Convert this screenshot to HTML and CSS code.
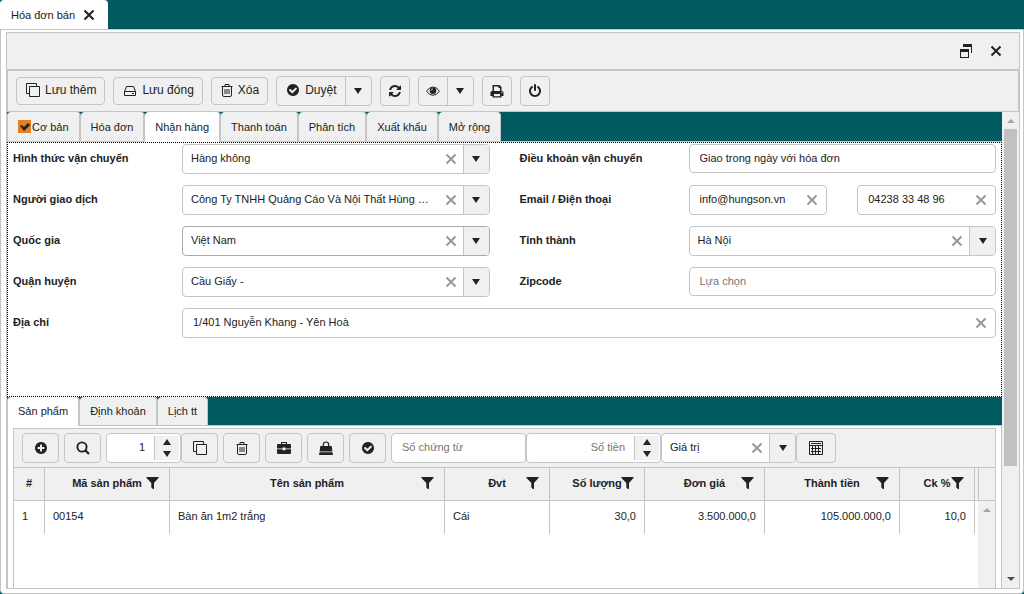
FILE: index.html
```html
<!DOCTYPE html>
<html lang="vi">
<head>
<meta charset="utf-8">
<title>Hóa đơn bán</title>
<link rel="stylesheet" href="styles.css">
</head>
<body>
<svg class="defs" aria-hidden="true">
  <symbol id="x" viewBox="0 0 14 14"><path d="M2.500 2.500l9 9M11.500 2.500l-9 9" fill="none" stroke="currentColor" stroke-width="2"/></symbol>
  <symbol id="down" viewBox="0 0 8 6" preserveAspectRatio="none"><path d="M0 0h8L4 6z"/></symbol>
  <symbol id="copy" viewBox="0 0 14 14"><path d="M3.500 3.500h10v10h-10zM3.500 10.500h-3v-10h10v3" fill="none" stroke="currentColor"/></symbol>
  <symbol id="drive" viewBox="0 0 14 14"><path d="M1.500 8.500L3.500 3.500h7l2 5v4h-11zM1.500 8.500h11M9 10.500h2" fill="none" stroke="currentColor"/></symbol>
  <symbol id="trash" viewBox="0 0 12 14"><path d="M.5 3.500h11M4 3V1.500h4V3M1.500 3.500v8.500q0 1.500 1.500 1.500h6q1.500 0 1.500-1.500V3.500M4 6v5M6 6v5M8 6v5" fill="none" stroke="currentColor"/></symbol>
  <symbol id="check" viewBox="0 0 1792 1792"><path d="M1412 734q0-28-18-46l-91-90q-19-19-45-19t-45 19l-408 407-226-226q-19-19-45-19t-45 19l-91 90q-18 18-18 46 0 27 18 45l362 362q19 19 45 19 27 0 46-19l543-543q18-18 18-45zm252 162q0 209-103 385.500t-279.500 279.500-385.500 103-385.500-103-279.500-279.500-103-385.500 103-385.500 279.500-279.500 385.500-103 385.500 103 279.500 279.500 103 385.500z"/></symbol>
  <symbol id="plus" viewBox="0 0 1792 1792"><path d="M1344 960v-128q0-26-19-45t-45-19h-256v-256q0-26-19-45t-45-19h-128q-26 0-45 19t-19 45v256h-256q-26 0-45 19t-19 45v128q0 26 19 45t45 19h256v256q0 26 19 45t45 19h128q26 0 45-19t19-45v-256h256q26 0 45-19t19-45zm320-64q0 209-103 385.500t-279.500 279.500-385.500 103-385.500-103-279.500-279.500-103-385.500 103-385.500 279.500-279.500 385.500-103 385.500 103 279.500 279.500 103 385.500z"/></symbol>
  <symbol id="refresh" viewBox="0 0 1792 1792"><path d="M1639 1056q0 5-1 7-64 268-268 434.500t-478 166.500q-146 0-282.500-55t-243.500-157l-129 129q-19 19-45 19t-45-19-19-45v-448q0-26 19-45t45-19h448q26 0 45 19t19 45-19 45l-137 137q71 66 161 102t187 36q134 0 250-65t186-179q11-17 53-117 8-23 30-23h192q13 0 22.500 9.500t9.500 22.500zm25-800v448q0 26-19 45t-45 19h-448q-26 0-45-19t-19-45 19-45l138-138q-148-137-349-137-134 0-250 65t-186 179q-11 17-53 117-8 23-30 23h-199q-13 0-22.500-9.500t-9.500-22.500v-7q65-268 270-434.500t480-166.500q146 0 284 55.500t245 156.500l130-129q19-19 45-19t45 19 19 45z"/></symbol>
  <symbol id="power" viewBox="0 0 1792 1792"><path d="M1664 896q0 156-61 298t-164 245-245 164-298 61-298-61-245-164-164-245-61-298q0-182 80.500-343t226.500-270q43-32 95.500-25t83.500 50q32 42 24.500 94.500t-49.500 84.500q-98 74-151.500 181t-53.500 228q0 104 40.500 198.500t109.500 163.500 163.500 109.500 198.500 40.500 198.500-40.500 163.500-109.500 109.500-163.500 40.500-198.500q0-121-53.500-228t-151.500-181q-42-32-49.500-84.500t24.500-94.500q31-43 84-50t95 25q146 109 226.500 270t80.500 343zm-640-768v640q0 52-38 90t-90 38-90-38-38-90v-640q0-52 38-90t90-38 90 38 38 90z"/></symbol>
  <symbol id="eye" viewBox="0 0 14 14"><path d="M.6 7.200Q3.200 3 7 3t6.400 4.200Q10.800 11.300 7 11.300T.6 7.200z" fill="none" stroke="currentColor"/><circle cx="7" cy="6.700" r="3.300"/><path d="M5.200 6.600Q5.300 5 7 4.900" fill="none" stroke="#f0f0f0" stroke-width=".8"/></symbol>
  <symbol id="print" viewBox="0 0 14 14"><path d="M2.500 1h7l2 2v4h.5q1.500 0 1.500 1.500V12h-2v1.500h-9V12h-2V8.500Q.5 7 2 7h.5zM4 2.500V7h6V4H8.500V2.500zM4 10v2.300h6V10zM11.300 8v1h1V8z" fill-rule="evenodd"/></symbol>
  <symbol id="search" viewBox="0 0 14 14"><circle cx="6" cy="6" r="4.600" fill="none" stroke="currentColor" stroke-width="1.900"/><path d="M9.300 9.300L13 13" stroke="currentColor" stroke-width="2.300"/></symbol>
  <symbol id="case" viewBox="0 0 14 14"><path d="M4 3V1h6v2h3q1 0 1 1v3.500H8.500v-1h-3v1H0V4q0-1 1-1zM5.200 3h3.600v-.9H5.200zM0 8.300h5.500v1h3v-1H14V12q0 1-1 1H1q-1 0-1-1z" fill-rule="evenodd"/></symbol>
  <symbol id="bag" viewBox="0 0 14 14"><path d="M1.300 5h11.400l.7 5.500H.6zM.5 11.200h13L14 14H0z"/><path d="M4.300 7V3.700Q4.300 1 7 1t2.700 2.700V7" fill="none" stroke="currentColor" stroke-width="1.200"/></symbol>
  <symbol id="calc" viewBox="0 0 14 14"><path d="M.5.500h13v13H.5zM.5 4.500h13M3.500 5v8M6.500 5v8M9.500 5v8M2 7.500h10M2 10.500h10M2 2.500h10" fill="none" stroke="currentColor"/></symbol>
  <symbol id="funnel" viewBox="0 0 12 12"><path d="M0 0h12v1L7.500 6v6h-1L4.800 10.500V6L0 1z"/></symbol>
  <symbol id="restore" viewBox="0 0 12 14"><path d="M3 0h9v9h-1V3H3zM0 5h9v9H0zM1 8v5h7V8z" fill-rule="evenodd"/></symbol>
</svg>
<div class="app">
  <header class="doc-tabs">
    <div class="doc-tab">Hóa đơn bán <button class="plain" aria-label="Đóng thẻ"><svg class="ic14"><use href="#x"/></svg></button></div>
  </header>
  <div class="doc">
    <main class="window">
      <div class="titlebar">
        <button class="plain" aria-label="Khôi phục"><svg class="restore"><use href="#restore"/></svg></button>
        <button class="plain" aria-label="Đóng"><svg class="ic14"><use href="#x"/></svg></button>
      </div>
      <div class="toolbar">
        <button class="btn text"><svg class="ic14"><use href="#copy"/></svg>Lưu thêm</button>
        <button class="btn text"><svg class="ic14"><use href="#drive"/></svg>Lưu đóng</button>
        <button class="btn text"><svg class="bin"><use href="#trash"/></svg>Xóa</button>
        <div class="split"><button class="main"><svg class="ic14"><use href="#check"/></svg>Duyệt</button><button class="arrow" aria-label="Mở danh sách duyệt"><svg class="tri"><use href="#down"/></svg></button></div>
        <button class="btn icon" aria-label="Làm mới"><svg class="ic14"><use href="#refresh"/></svg></button>
        <div class="split"><button class="eye" aria-label="Xem"><svg class="ic14"><use href="#eye"/></svg></button><button class="arrow" aria-label="Tùy chọn xem"><svg class="tri"><use href="#down"/></svg></button></div>
        <button class="btn icon" aria-label="In"><svg class="ic14"><use href="#print"/></svg></button>
        <button class="btn icon" aria-label="Thoát"><svg class="ic14"><use href="#power"/></svg></button>
      </div>
      <div class="body">
        <div class="content">
          <nav class="tabs top">
            <label class="tab checked"><input type="checkbox" checked>Cơ bản</label>
            <button class="tab">Hóa đơn</button>
            <button class="tab active">Nhận hàng</button>
            <button class="tab">Thanh toán</button>
            <button class="tab">Phân tích</button>
            <button class="tab">Xuất khẩu</button>
            <button class="tab">Mở rộng</button>
          </nav>
          <form class="form">
            <label for="ship">Hình thức vận chuyển</label>
            <div class="field"><select id="ship"><option>Hàng không</option></select><button type="button" class="clear" aria-label="Xóa"><svg><use href="#x"/></svg></button><span class="drop"><svg class="tri"><use href="#down"/></svg></span></div>
            <label class="second" for="terms">Điều khoản vận chuyển</label>
            <div class="field short"><input id="terms" value="Giao trong ngày với hóa đơn"></div>

            <label for="person">Người giao dịch</label>
            <div class="field"><select id="person"><option>Công Ty TNHH Quảng Cáo Và Nội Thất Hùng …</option></select><button type="button" class="clear" aria-label="Xóa"><svg><use href="#x"/></svg></button><span class="drop"><svg class="tri"><use href="#down"/></svg></span></div>
            <label class="second" for="email">Email / Điện thoại</label>
            <div class="pair">
              <div class="field"><input id="email" value="info@hungson.vn"><button type="button" class="clear" aria-label="Xóa"><svg><use href="#x"/></svg></button></div>
              <div class="field"><input aria-label="Điện thoại" value="04238 33 48 96"><button type="button" class="clear" aria-label="Xóa"><svg><use href="#x"/></svg></button></div>
            </div>

            <label for="country">Quốc gia</label>
            <div class="field hover"><select id="country"><option>Việt Nam</option></select><button type="button" class="clear" aria-label="Xóa"><svg><use href="#x"/></svg></button><span class="drop"><svg class="tri"><use href="#down"/></svg></span></div>
            <label class="second" for="city">Tỉnh thành</label>
            <div class="field"><select id="city"><option>Hà Nội</option></select><button type="button" class="clear" aria-label="Xóa"><svg><use href="#x"/></svg></button><span class="drop"><svg class="tri"><use href="#down"/></svg></span></div>

            <label for="district">Quận huyện</label>
            <div class="field"><select id="district"><option>Cầu Giấy -</option></select><button type="button" class="clear" aria-label="Xóa"><svg><use href="#x"/></svg></button><span class="drop"><svg class="tri"><use href="#down"/></svg></span></div>
            <label class="second" for="zip">Zipcode</label>
            <div class="field short"><input id="zip" placeholder="Lựa chọn"></div>

            <label for="address">Địa chỉ</label>
            <div class="field wide"><input id="address" value="1/401 Nguyễn Khang - Yên Hoà"><button type="button" class="clear" aria-label="Xóa"><svg><use href="#x"/></svg></button></div>
          </form>
          <nav class="tabs">
            <button class="tab active">Sản phẩm</button>
            <button class="tab">Định khoản</button>
            <button class="tab">Lịch tt</button>
          </nav>
          <section class="panel">
            <div class="grid">
              <div class="gridbar">
                <button class="btn tool" aria-label="Thêm"><svg class="ic14"><use href="#plus"/></svg></button>
                <button class="btn tool" aria-label="Tìm"><svg class="ic14"><use href="#search"/></svg></button>
                <div class="joined">
                  <div class="field qty"><input aria-label="Số dòng" value="1"><span class="spin"><button aria-label="Tăng"><svg class="tri up"><use href="#down"/></svg></button><button aria-label="Giảm"><svg class="tri"><use href="#down"/></svg></button></span></div>
                  <button class="btn tool" aria-label="Sao chép"><svg class="ic14"><use href="#copy"/></svg></button>
                </div>
                <button class="btn tool" aria-label="Xóa dòng"><svg class="bin"><use href="#trash"/></svg></button>
                <button class="btn tool" aria-label="Công việc"><svg class="ic14"><use href="#case"/></svg></button>
                <button class="btn tool" aria-label="Giỏ hàng"><svg class="ic14"><use href="#bag"/></svg></button>
                <button class="btn tool" aria-label="Duyệt"><svg class="ic14"><use href="#check"/></svg></button>
                <div class="joined">
                  <div class="field filter"><input aria-label="Số chứng từ" placeholder="Số chứng từ"></div>
                  <div class="field filter amount"><input aria-label="Số tiền" placeholder="Số tiền"><span class="spin"><button aria-label="Tăng"><svg class="tri up"><use href="#down"/></svg></button><button aria-label="Giảm"><svg class="tri"><use href="#down"/></svg></button></span></div>
                  <div class="field filter"><select aria-label="Loại"><option>Giá trị</option></select><button class="clear" aria-label="Xóa"><svg><use href="#x"/></svg></button><span class="drop"><svg class="tri"><use href="#down"/></svg></span></div>
                  <button class="btn calc" aria-label="Tính"><svg class="ic14"><use href="#calc"/></svg></button>
                </div>
              </div>
              <div class="gridbody">
                <table>
                  <colgroup><col class="c-no"><col class="c-code"><col class="c-name"><col class="c-unit"><col class="c-qty"><col class="c-price"><col class="c-total"><col class="c-ck"><col></colgroup>
                  <thead><tr>
                    <th>#</th>
                    <th>Mã sản phẩm<svg><use href="#funnel"/></svg></th>
                    <th>Tên sản phẩm<svg><use href="#funnel"/></svg></th>
                    <th>Đvt<svg><use href="#funnel"/></svg></th>
                    <th>Số lượng<svg><use href="#funnel"/></svg></th>
                    <th>Đơn giá<svg><use href="#funnel"/></svg></th>
                    <th>Thành tiền<svg><use href="#funnel"/></svg></th>
                    <th>Ck %<svg><use href="#funnel"/></svg></th>
                    <th></th>
                  </tr></thead>
                  <tbody><tr><td>1</td><td>00154</td><td>Bàn ăn 1m2 trắng</td><td>Cái</td><td class="num">30,0</td><td class="num">3.500.000,0</td><td class="num">105.000.000,0</td><td class="num">10,0</td><td class="last"></td></tr></tbody>
                </table>
                <div class="gridscroll"><div class="corner"></div><svg class="sarrow up dim"><use href="#down"/></svg></div>
              </div>
            </div>
          </section>
        </div>
        <div class="scroll"><svg class="sarrow up dim"><use href="#down"/></svg><div class="thumb"></div><svg class="sarrow"><use href="#down"/></svg></div>
      </div>
    </main>
  </div>
</div>
</body>
</html>
```

FILE: styles.css
```css
* { box-sizing: border-box; }
:root { --teal: #005a61; --line: #c5c5c5; --gray: #f0f0f0; --ink: #222; }
body { margin: 0; background: var(--teal); color: var(--ink); font: 11px/16px "Liberation Sans", Arial, sans-serif; }
button, input, select { font: inherit; color: inherit; margin: 0; }
button { padding: 0; border: 0; background: none; display: flex; align-items: center; justify-content: center; }
svg { display: block; fill: currentColor; flex: none; }
.defs { width: 0; height: 0; position: absolute; }
.ic14 { width: 14px; height: 14px; }
.bin { width: 12px; height: 14px; }
.tri { width: 8px; height: 6px; }
.up { transform: rotate(180deg); }

.app { display: flex; flex-direction: column; height: 100vh; min-height: 480px; }
.doc-tabs { display: flex; }
.doc-tab { display: flex; align-items: center; gap: 7px; height: 29px; padding: 0 12px 0 11px; background: #fff; border-radius: 4px 4px 0 0; }
.doc { flex: 1; min-height: 0; display: flex; padding: 2px 3px 4px 5px; background: #fff; border: 1px solid var(--line); border-radius: 0 0 4px 4px; }
.window { flex: 1; min-width: 0; display: flex; flex-direction: column; border: 1px solid var(--line); }
.titlebar { display: flex; justify-content: flex-end; align-items: center; gap: 17px; height: 37px; padding-right: 16px; background: var(--gray); border-bottom: 1px solid var(--line); }
.restore { width: 12px; height: 14px; }
.toolbar { display: flex; align-items: center; gap: 8px; height: 42px; padding: 0 8px; background: var(--gray); border: 1px solid var(--line); font-size: 12px; }

.btn, .split { background: var(--gray); border: 1px solid var(--line); border-radius: 4px; }
.btn.text { height: 28px; padding: 0 8px 2px 9px; gap: 5px; }
.btn.icon { width: 30px; height: 30px; }
.split { display: flex; height: 30px; }
.split .main { padding: 0 8px 2px 9px; gap: 5px; }
.split .eye { width: 28px; }
.split .arrow { width: 26px; border-left: 1px solid var(--line); }

.body { flex: 1; min-height: 0; display: flex; }
.content { flex: 1; min-width: 0; display: flex; flex-direction: column; overflow: hidden; background: #fff; }
.tabs { display: flex; height: 29px; flex: none; background: var(--teal); border-bottom: 1px solid var(--line); }
.tabs.top { height: 30px; }
.tab { display: flex; align-items: center; height: 100%; padding: 0 10px; background: var(--gray); border-right: 2px solid var(--line); border-radius: 4px 4px 0 0; }
.tab:first-child { border-left: 1px solid var(--line); }
.tab.active { height: calc(100% + 1px); padding-bottom: 1px; background: #fff; }
.tab:last-child { border-right-width: 1px; }
.tab.checked { gap: 1px; }
.tab input { appearance: none; width: 13px; height: 13px; background: #e67e22; }
.tab input::before { content: ""; display: block; width: 13px; height: 13px; background: var(--ink); clip-path: polygon(2px 6px, 4px 5px, 6px 7px, 10px 3px, 12px 5px, 6px 11px); }

.form { flex: none; display: grid; grid-template-columns: 169px 1fr 199px 1fr; row-gap: 11px; padding: 1px 5px 58px; border: 1px dotted #000; }
.form > label { height: 30px; line-height: 28px; font-weight: bold; }
.form .second { margin-left: 30px; }
.wide { grid-column: 2 / -1; }
.pair { display: grid; grid-template-columns: 1fr 1fr; column-gap: 30px; }
.field { display: flex; height: 30px; background: #fff; border: 1px solid var(--line); border-radius: 4px; overflow: hidden; min-width: 0; }
.field.short { height: 29px; }
.field.hover { border-color: #aaa; }
.field input, .field select { flex: 1; width: 0; min-width: 0; height: 26px; border: 0; outline: 0; background: none; padding: 0 0 0 10px; appearance: none; }
.field select { padding-left: 8px; }
.field input::placeholder { color: #757575; }
.clear { width: 24px; color: #999; }
.clear svg { width: 14px; height: 14px; }
.field > .clear:last-child { width: 28px; }
.drop { display: flex; align-items: center; justify-content: center; width: 26px; background: var(--gray); border-left: 1px solid var(--line); }

.panel { flex: 1; min-height: 0; display: flex; padding: 2px 5px 0; border: 1px solid var(--line); border-width: 0 1px; }
.grid { flex: 1; min-width: 0; display: flex; flex-direction: column; border: 1px solid var(--line); border-bottom: 0; }
.gridbar { display: flex; align-items: center; gap: 5px; height: 39px; flex: none; padding-left: 8px; background: var(--gray); border-bottom: 1px solid var(--line); }
.btn.tool { width: 37px; height: 30px; }
.btn.calc { width: 40px; height: 30px; }
.joined { display: flex; }
.qty { width: 75px; }
.qty input, .amount input { text-align: right; padding: 0 9px 0 0; }
.filter { width: 135px; }
.spin { display: flex; flex-direction: column; justify-content: center; gap: 6px; align-items: center; width: 25px; margin: 2px 1px 2px 0; background: var(--gray); border-left: 1px solid var(--line); }
.gridbody { flex: 1; min-height: 0; display: flex; overflow: hidden; }
table { flex: 1; align-self: flex-start; min-width: 0; table-layout: fixed; border-collapse: separate; border-spacing: 0; }
.c-no { width: 31px; } .c-code { width: 125px; } .c-name { width: 275px; } .c-unit { width: 105px; }
.c-qty { width: 95px; } .c-price { width: 120px; } .c-total { width: 135px; } .c-ck { width: 75px; }
th { position: relative; height: 33px; padding: 0 0 2px; background: var(--gray); border: 1px solid var(--line); border-width: 0 1px 1px 0; white-space: nowrap; }
th:last-child { border-right: 0; }
th svg { position: absolute; right: 10px; top: 9px; width: 13px; height: 12px; }
td { height: 33px; padding: 0 8px 3px; border-right: 1px solid var(--line); white-space: nowrap; }
td.num { text-align: right; }
td.last { padding: 0; border: 0; }
.gridscroll { width: 17px; background: var(--gray); display: flex; flex-direction: column; align-items: center; gap: 7px; }
.corner { align-self: stretch; height: 33px; border: 1px solid var(--line); border-width: 0 0 1px 1px; }
.scroll { width: 17px; display: flex; flex-direction: column; align-items: center; padding: 7px 0; background: var(--gray); }
.sarrow { width: 8px; height: 4px; color: #505050; }
.sarrow.dim { color: #a3a3a3; }
.scroll .thumb { width: 13px; height: 73%; margin: 6px 0 auto; background: #c1c1c1; }
```
